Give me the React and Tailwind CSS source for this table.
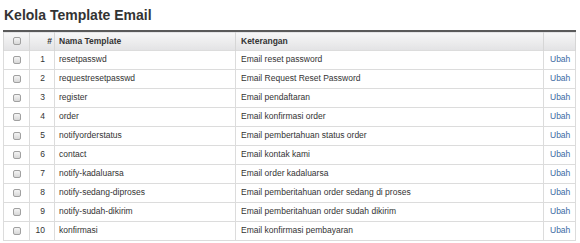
import React from 'react';

const rows = [
    ['resetpasswd', 'Email reset password'],
    ['requestresetpasswd', 'Email Request Reset Password'],
    ['register', 'Email pendaftaran'],
    ['order', 'Email konfirmasi order'],
    ['notifyorderstatus', 'Email pembertahuan status order'],
    ['contact', 'Email kontak kami'],
    ['notify-kadaluarsa', 'Email order kadaluarsa'],
    ['notify-sedang-diproses', 'Email pemberitahuan order sedang di proses'],
    ['notify-sudah-dikirim', 'Email pemberitahuan order sudah dikirim'],
    ['konfirmasi', 'Email konfirmasi pembayaran'],
];

const Check = () => (
    <span className="inline-block w-[8px] h-[8px] rounded-[2px] border border-[#a0a0a0] bg-gradient-to-b from-[#f4f4f4] to-[#d8d8d8] align-middle" />
);

const App = () => {
    return (
        <div className="w-[580px] h-[243px] bg-white px-[3px] font-['Liberation_Sans',Arial,sans-serif] text-[#333]">
            <h1 className="pt-[6px] pl-px text-[14px] font-bold leading-[18px] text-[#333]">Kelola Template Email</h1>
            <table className="mt-[6px] w-[573px] border-collapse text-[8.5px] leading-none">
                <thead>
                    <tr className="h-[19px] border-t-2 border-[#5a5a5a] bg-gradient-to-b from-[#f7f7f7] to-[#e3e3e5]">
                        <th className="w-[26px] border-l border-r border-[#d6d6d6] text-center font-normal"><Check /></th>
                        <th className="w-[25px] border-r border-[#d6d6d6] pr-[2px] text-right font-bold">#</th>
                        <th className="w-[181px] border-r border-[#d6d6d6] pl-[4px] text-left font-bold">Nama Template</th>
                        <th className="w-[308px] border-r border-[#d6d6d6] pl-[5px] text-left font-bold">Keterangan</th>
                        <th className="border-r border-[#d6d6d6]"></th>
                    </tr>
                </thead>
                <tbody>
                    {rows.map(([name, desc], i) => (
                        <tr key={name} className="h-[19px] border-t border-b border-[#dcdcdc]">
                            <td className="border-l border-r border-[#dcdcdc] text-center"><Check /></td>
                            <td className="border-r border-[#dcdcdc] pr-[9px] text-right">{i + 1}</td>
                            <td className="border-r border-[#dcdcdc] pl-[4px]">{name}</td>
                            <td className="border-r border-[#dcdcdc] pl-[5px]">{desc}</td>
                            <td className="border-r border-[#dcdcdc] pl-[6px] text-left text-[#3b6aa3]">Ubah</td>
                        </tr>
                    ))}
                </tbody>
            </table>
        </div>
    );
};

export default App;
